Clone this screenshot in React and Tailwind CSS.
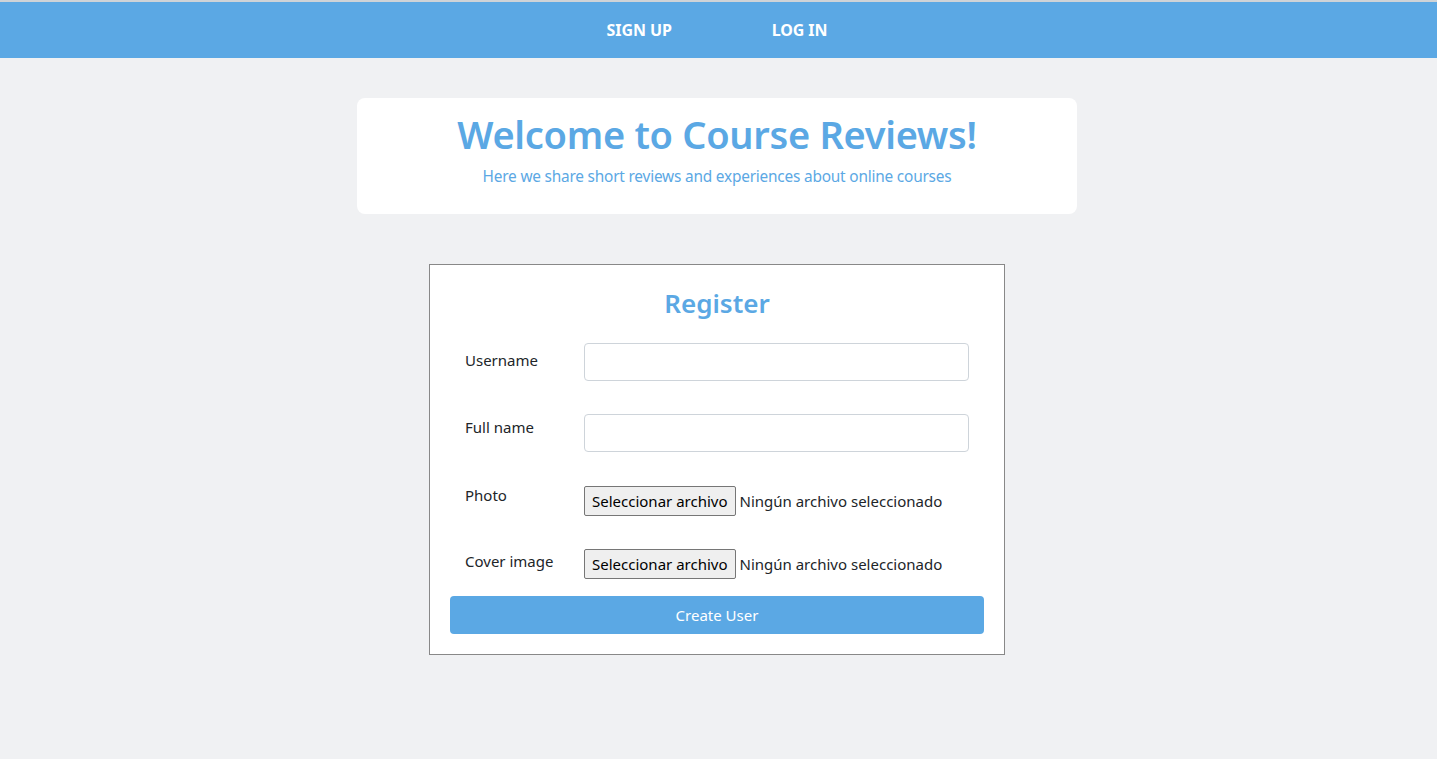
import React from 'react';

const FileField = () => (
    <div className="flex items-center gap-[4px]">
        <span className="h-[30px] px-[7px] flex items-center bg-[#efefef] border border-[#767676] rounded-[2px] text-[15px] text-black">
            Seleccionar archivo
        </span>
        <span className="text-[15px] text-[#212529]">Ningún archivo seleccionado</span>
    </div>
);

const App = () => {
    return (
        <div className="min-h-[759px] bg-[#f0f1f3] font-['Noto_Sans','Open_Sans',sans-serif]">
            <div className="h-[2px] bg-[#cfd3d7]" />
            <nav className="h-[56px] bg-[#5ba8e4] flex items-center justify-center gap-[100px] pr-[3px]">
                <a className="text-white font-bold text-[16px] tracking-[-0.1px]">SIGN UP</a>
                <a className="text-white font-bold text-[16px] tracking-[-0.1px]">LOG IN</a>
            </nav>

            <div className="pr-[3px]">
                <div className="w-[720px] mx-auto mt-[40px] bg-white rounded-[8px] h-[116px] flex flex-col items-center pt-[10px]">
                    <h1 className="text-[38px] leading-[52px] font-semibold text-[#5ba8e4] tracking-[-0.3px]">Welcome to Course Reviews!</h1>
                    <p className="mt-[5px] text-[15.4px] text-[#5ba8e4] tracking-[-0.2px]">Here we share short reviews and experiences about online courses</p>
                </div>

                {/* Register form */}
                <div className="w-[576px] mx-auto mt-[50px] bg-white border border-[#888888] px-[20px] pt-[20px] pb-[20px]">
                    <h2 className="text-center text-[26px] leading-[36px] font-semibold text-[#5ba8e4]">Register</h2>

                    <div className="mt-[22px] px-[15px] flex flex-col">
                        <div className="flex items-start">
                            <label className="w-[119px] pt-[6px] text-[15px] text-[#212529]">Username</label>
                            <input type="text" className="w-[385px] h-[38px] border border-[#ced4da] rounded-[4px] px-3 outline-none" />
                        </div>
                        <div className="flex items-start mt-[33px]">
                            <label className="w-[119px] pt-[2px] text-[15px] text-[#212529]">Full name</label>
                            <input type="text" className="w-[385px] h-[38px] border border-[#ced4da] rounded-[4px] px-3 outline-none" />
                        </div>
                        <div className="flex items-start mt-[34px]">
                            <label className="w-[119px] text-[15px] text-[#212529] leading-[18px]">Photo</label>
                            <FileField />
                        </div>
                        <div className="flex items-start mt-[33px]">
                            <label className="w-[119px] text-[15px] text-[#212529] leading-[25px]">Cover image</label>
                            <FileField />
                        </div>
                    </div>

                    <button className="mt-[17px] w-full h-[38px] bg-[#5ba8e4] rounded-[4px] text-white text-[15px]">
                        Create User
                    </button>
                </div>
            </div>
        </div>
    );
};

export default App;
